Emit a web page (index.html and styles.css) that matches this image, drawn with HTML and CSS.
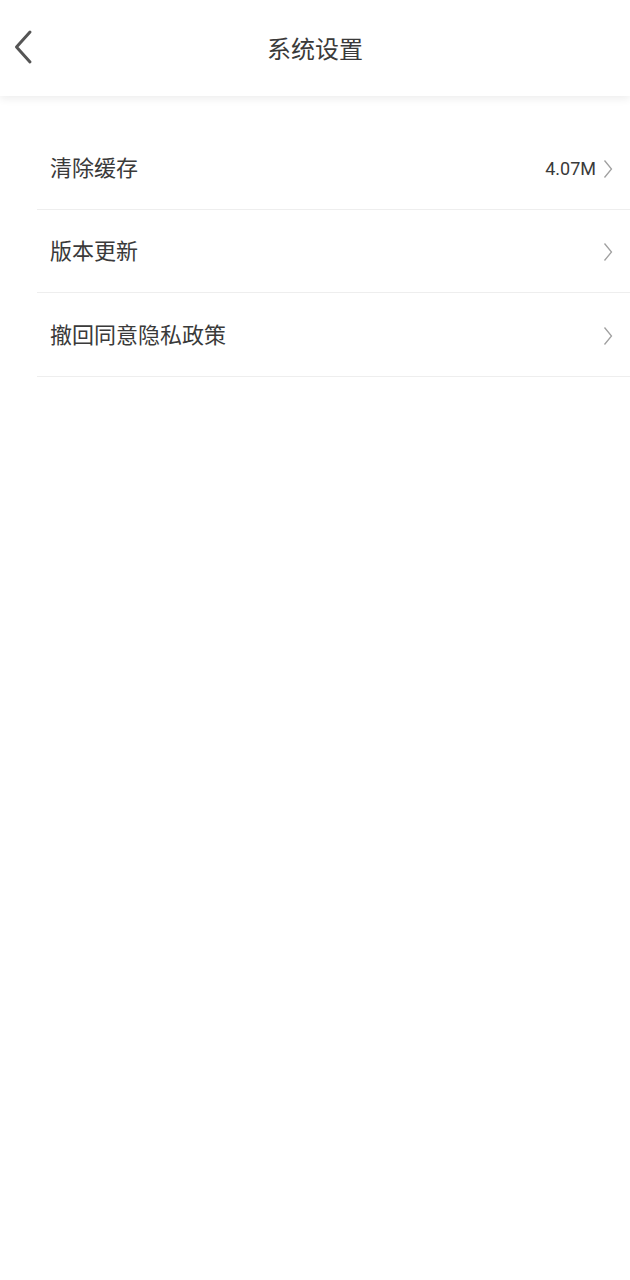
FILE: index.html
```html
<!DOCTYPE html>
<html lang="zh">
<head>
<meta charset="utf-8">
<title>系统设置</title>
<link rel="stylesheet" href="styles.css">
</head>
<body>
<header class="topbar">
  <button class="back" aria-label="返回">
    <svg width="22" height="36" viewBox="0 0 22 36"><path d="M17 3 L3.5 18 L17 33" fill="none" stroke="#555" stroke-width="3" stroke-linecap="round" stroke-linejoin="round"/></svg>
  </button>
  <h1 class="title">系统设置</h1>
</header>
<main class="list">
  <div class="row">
    <span class="label">清除缓存</span>
    <span class="value">4.07M</span>
    <svg class="arrow" width="10" height="20" viewBox="0 0 10 20"><path d="M1.5 1.5 L8.5 10 L1.5 18.5" fill="none" stroke="#a0a0a0" stroke-width="1.3"/></svg>
  </div>
  <div class="row">
    <span class="label">版本更新</span>
    <svg class="arrow" width="10" height="20" viewBox="0 0 10 20"><path d="M1.5 1.5 L8.5 10 L1.5 18.5" fill="none" stroke="#a0a0a0" stroke-width="1.3"/></svg>
  </div>
  <div class="row">
    <span class="label">撤回同意隐私政策</span>
    <svg class="arrow" width="10" height="20" viewBox="0 0 10 20"><path d="M1.5 1.5 L8.5 10 L1.5 18.5" fill="none" stroke="#a0a0a0" stroke-width="1.3"/></svg>
  </div>
</main>
</body>
</html>
```
FILE: styles.css
```css
html, body {
  margin: 0;
  padding: 0;
  background: #fff;
  font-family: Roboto, "Noto Sans CJK SC", sans-serif;
  color: #3a3a3a;
}
.topbar {
  position: relative;
  height: 96px;
  display: flex;
  align-items: center;
  justify-content: center;
  background: #fff;
  box-shadow: 0 3px 8px rgba(0, 0, 0, 0.07);
}
.back {
  position: absolute;
  left: 13px;
  top: 29px;
  padding: 0;
  border: 0;
  background: none;
  display: flex;
}
.title {
  margin: 4px 0 0;
  font-size: 24px;
  font-weight: 400;
  color: #3a3a3a;
  line-height: 1;
}
.list {
  margin-top: 30px;
  margin-left: 37px;
}
.row {
  height: 82.5px;
  display: flex;
  align-items: center;
  padding: 3px 17px 0 13px;
  box-sizing: border-box;
  height: 83.5px;
  border-bottom: 1px solid #eee;
}
.label {
  flex: 1;
  font-size: 22px;
  line-height: 1;
  color: #3a3a3a;
}
.value {
  font-size: 18px;
  color: #3a3a3a;
  margin-right: 7px;
}
.arrow {
  display: block;
}
```
